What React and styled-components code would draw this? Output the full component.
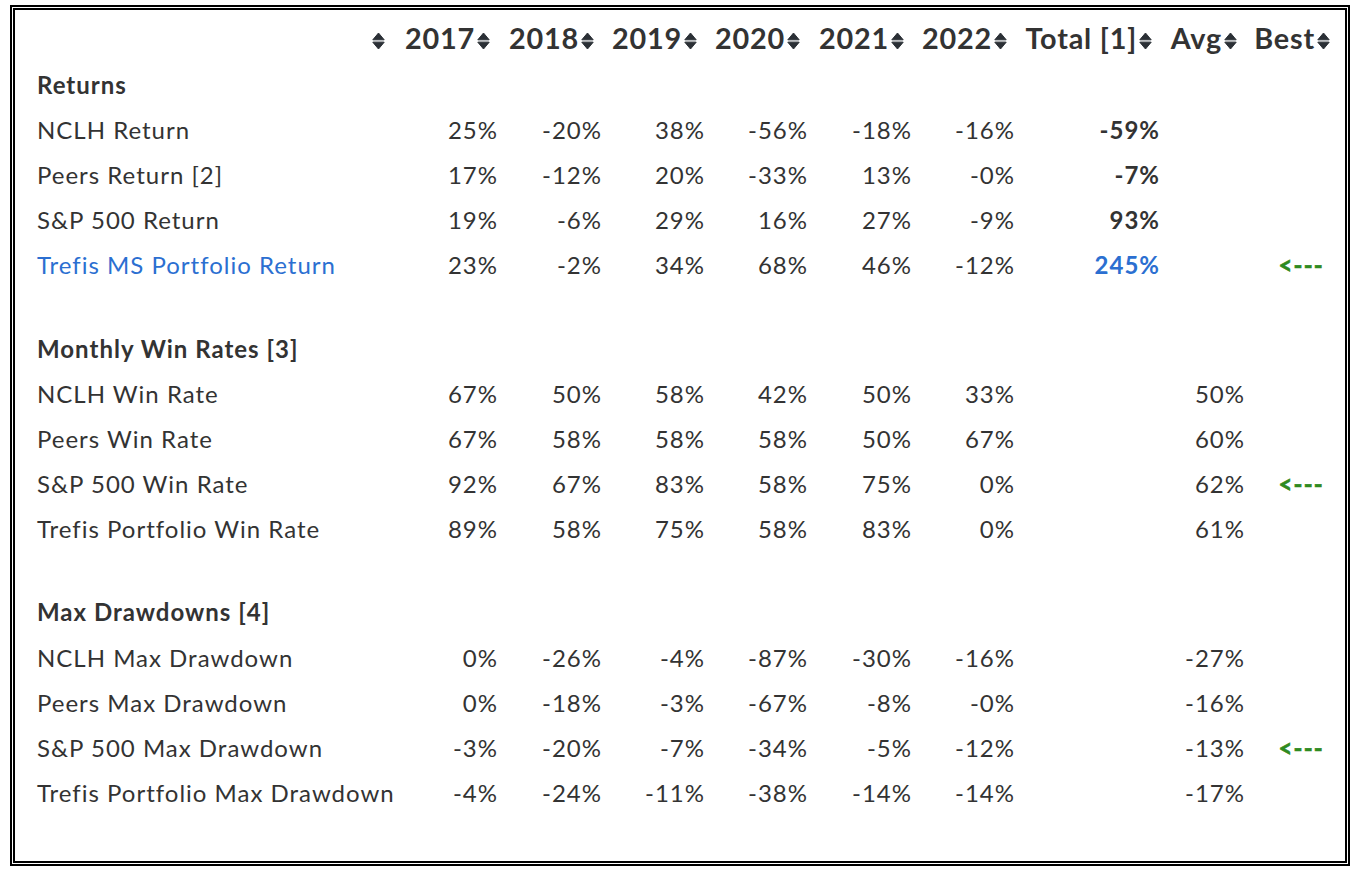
import React from "react";
import styled, { createGlobalStyle } from "styled-components";

const GlobalStyle = createGlobalStyle`
  body {
    margin: 0;
    background: #fff;
    font-family: Lato, "Open Sans", sans-serif;
    color: #333;
  }
`;

const headers = ["2017", "2018", "2019", "2020", "2021", "2022", "Total [1]", "Avg", "Best"];
const colWidths = [367, 102, 104, 103, 103, 104, 103, 145, 85, 93];

const sections = [
  {
    title: "Returns",
    rows: [
      { label: "NCLH Return", years: ["25%", "-20%", "38%", "-56%", "-18%", "-16%"], total: "-59%" },
      { label: "Peers Return [2]", years: ["17%", "-12%", "20%", "-33%", "13%", "-0%"], total: "-7%" },
      { label: "S&P 500 Return", years: ["19%", "-6%", "29%", "16%", "27%", "-9%"], total: "93%" },
      {
        label: "Trefis MS Portfolio Return",
        years: ["23%", "-2%", "34%", "68%", "46%", "-12%"],
        total: "245%",
        best: true,
        highlight: true,
      },
    ],
  },
  {
    title: "Monthly Win Rates [3]",
    rows: [
      { label: "NCLH Win Rate", years: ["67%", "50%", "58%", "42%", "50%", "33%"], avg: "50%" },
      { label: "Peers Win Rate", years: ["67%", "58%", "58%", "58%", "50%", "67%"], avg: "60%" },
      { label: "S&P 500 Win Rate", years: ["92%", "67%", "83%", "58%", "75%", "0%"], avg: "62%", best: true },
      { label: "Trefis Portfolio Win Rate", years: ["89%", "58%", "75%", "58%", "83%", "0%"], avg: "61%" },
    ],
  },
  {
    title: "Max Drawdowns [4]",
    rows: [
      { label: "NCLH Max Drawdown", years: ["0%", "-26%", "-4%", "-87%", "-30%", "-16%"], avg: "-27%" },
      { label: "Peers Max Drawdown", years: ["0%", "-18%", "-3%", "-67%", "-8%", "-0%"], avg: "-16%" },
      { label: "S&P 500 Max Drawdown", years: ["-3%", "-20%", "-7%", "-34%", "-5%", "-12%"], avg: "-13%", best: true },
      { label: "Trefis Portfolio Max Drawdown", years: ["-4%", "-24%", "-11%", "-38%", "-14%", "-14%"], avg: "-17%" },
    ],
  },
];

const SortIcon = () => (
  <SortSvg viewBox="0 0 13 18" width="13" height="18">
    <path d="M6.5 1 L12.2 7.8 L0.8 7.8 Z" fill="#2b3036" stroke="#2b3036" strokeWidth="1" strokeLinejoin="round" />
    <rect x="1.5" y="8.6" width="10" height="0.9" fill="#b9bcc0" />
    <path d="M0.8 10.2 L12.2 10.2 L6.5 17 Z" fill="#2b3036" stroke="#2b3036" strokeWidth="1" strokeLinejoin="round" />
  </SortSvg>
);

const App = () => {
  return (
    <>
      <GlobalStyle />
      <Frame>
        <Table>
          <colgroup>
            {colWidths.map((w, i) => (
              <col key={i} style={{ width: w }} />
            ))}
          </colgroup>
          <thead>
            <tr>
              <HeadCell $lead>
                <SortIcon />
              </HeadCell>
              {headers.map((h) => (
                <HeadCell key={h}>
                  {h}
                  <SortIcon />
                </HeadCell>
              ))}
            </tr>
          </thead>
          <tbody>
            {sections.map((section, si) => (
              <React.Fragment key={section.title}>
                {si > 0 && (
                  <SpacerRow>
                    <td colSpan={10} />
                  </SpacerRow>
                )}
                <Row>
                  <Label $bold>{section.title}</Label>
                  <td colSpan={9} />
                </Row>
                {section.rows.map((row) => (
                  <Row key={row.label}>
                    <Label $blue={row.highlight}>{row.label}</Label>
                    {row.years.map((v, i) => (
                      <Value key={i}>{v}</Value>
                    ))}
                    <Value $bold $blue={row.highlight}>{row.total || ""}</Value>
                    <Value>{row.avg || ""}</Value>
                    <BestCell>{row.best ? <Arrow>&lt;---</Arrow> : ""}</BestCell>
                  </Row>
                ))}
              </React.Fragment>
            ))}
          </tbody>
        </Table>
      </Frame>
    </>
  );
};

const Frame = styled.div`
  margin: 5px 0 0 10px;
  width: 1340px;
  height: 861px;
  box-sizing: border-box;
  border: 5px double #000;
  padding: 4.5px 0 0 14px;
`;

const Table = styled.table`
  width: 1309px;
  table-layout: fixed;
  border-collapse: collapse;
  border-spacing: 0;
  font-size: 24px;
  letter-spacing: 1px;
`;

const HeadCell = styled.th`
  height: 47px;
  padding: 0 ${(p) => (p.$lead ? "11px" : "8px")} 0 0;
  font-size: 28.8px;
  font-weight: 700;
  letter-spacing: 0.8px;
  color: #333;
  text-align: right;
  white-space: nowrap;
  vertical-align: middle;
`;

const SortSvg = styled.svg`
  display: inline-block;
  margin-left: 2px;
  vertical-align: -1px;
`;

const Row = styled.tr`
  height: 45.2px;
`;

const SpacerRow = styled.tr`
  height: 38px;
`;

const Label = styled.td`
  padding: 0 0 0 8px;
  text-align: left;
  white-space: nowrap;
  font-weight: ${(p) => (p.$bold ? 700 : 400)};
  color: ${(p) => (p.$blue ? "#2b6fd1" : "#333")};
`;

const Value = styled.td`
  padding: 0;
  text-align: right;
  white-space: nowrap;
  font-weight: ${(p) => (p.$bold ? 700 : 400)};
  color: ${(p) => (p.$blue ? "#2b6fd1" : "#333")};
`;

const BestCell = styled.td`
  padding: 0 14px 0 0;
  text-align: right;
  white-space: nowrap;
`;

const Arrow = styled.span`
  color: #2f8a1f;
  font-weight: 700;
  font-size: 24px;
  letter-spacing: 1.2px;
  -webkit-text-stroke: 0.6px #2f8a1f;
`;

export default App;
